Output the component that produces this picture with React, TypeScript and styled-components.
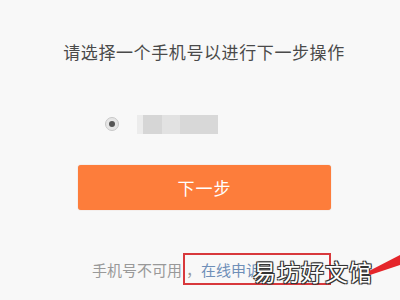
import React from 'react';
import styled, {createGlobalStyle} from 'styled-components';

const GlobalStyle = createGlobalStyle`
  body {
    margin: 0;
    background: #f8f8f8;
    font-family: "Noto Sans CJK SC", "Noto Sans", sans-serif;
  }
`;

const Page = styled.div`
  position: relative;
  width: 400px;
  height: 300px;
  overflow: hidden;
  background: #f8f8f8;
  display: flex;
  flex-direction: column;
`;

const Title = styled.div`
  margin-top: 40px;
  padding-left: 8px;
  height: 24px;
  line-height: 24px;
  text-align: center;
  font-size: 17px;
  letter-spacing: 0.6px;
  color: #4a4a4a;
`;

const PhoneRow = styled.div`
  margin-top: 50px;
  padding-left: 105px;
  height: 20px;
  display: flex;
  align-items: center;
  gap: 18px;
`;

const Radio = styled.span`
  box-sizing: border-box;
  width: 14px;
  height: 14px;
  border-radius: 50%;
  border: 1px solid #c8c8c8;
  background: #e6e6e6;
  display: flex;
  align-items: center;
  justify-content: center;

  &::after {
    content: '';
    width: 6px;
    height: 6px;
    border-radius: 50%;
    background: #555;
  }
`;

const Blurred = styled.div`
  display: flex;
  height: 19px;
`;

const BlurCell = styled.span<{w: number; shade: string}>`
  width: ${(p) => p.w}px;
  background: ${(p) => p.shade};
`;

const NextButton = styled.button`
  margin: 31px 0 0 78px;
  width: 253px;
  height: 45px;
  border: none;
  border-radius: 3px;
  background: #fd7d3b;
  box-shadow: 0 0 1px rgba(180, 90, 40, 0.5);
  color: #fff;
  font-family: inherit;
  font-size: 17px;
  letter-spacing: 1px;
`;

const Footer = styled.div`
  margin-top: 43px;
  padding-left: 92px;
  height: 32px;
  display: flex;
  align-items: center;
  font-size: 15px;
  color: #999;
`;

const Highlight = styled.span`
  box-sizing: border-box;
  margin-left: 1px;
  width: 148px;
  height: 32px;
  border: 2px solid #d8383c;
  display: flex;
  align-items: center;
  padding-left: 1px;
`;

const Link = styled.span`
  color: #6f8fb8;
`;

const Watermark = styled.div`
  position: absolute;
  left: 253px;
  top: 254px;
  font-size: 23px;
  line-height: 34px;
  letter-spacing: 1px;
  color: #fff;
  text-shadow: -1px -1px 0 #333, 1px -1px 0 #333, -1px 1px 0 #333, 1px 1px 0 #333, 0 0 2px #333;
`;

const Arrow = styled.svg`
  position: absolute;
  left: 0;
  top: 0;
`;

export default function App() {
  const cells = [
    {w: 6, shade: '#ececec'},
    {w: 19, shade: '#d6d6d6'},
    {w: 18, shade: '#e2e2e2'},
    {w: 38, shade: '#d8d8d8'},
  ];
  return (
    <Page>
      <GlobalStyle/>
      <Title>请选择一个手机号以进行下一步操作</Title>
      <PhoneRow>
        <Radio/>
        <Blurred>
          {cells.map((c, i) => <BlurCell key={i} w={c.w} shade={c.shade}/>)}
        </Blurred>
      </PhoneRow>
      <NextButton>下一步</NextButton>
      <Footer>
        手机号不可用
        <Highlight>，<Link>在线申诉</Link></Highlight>
      </Footer>
      <Watermark>易坊好文馆</Watermark>
      <Arrow width="400" height="300">
        <polygon points="369,271 370,275 400,265 400,255" fill="#e5262b"/>
      </Arrow>
    </Page>
  );
}
